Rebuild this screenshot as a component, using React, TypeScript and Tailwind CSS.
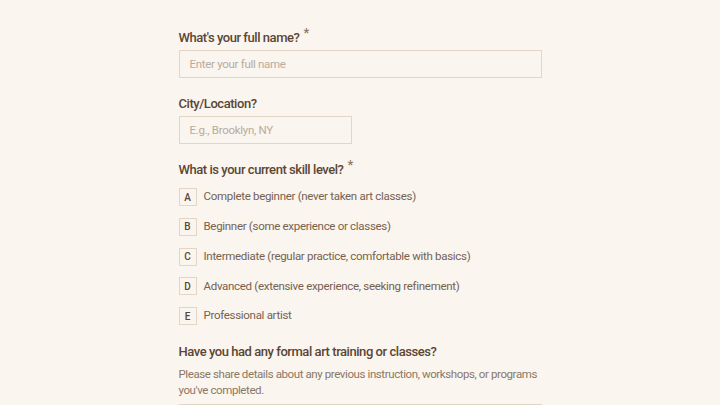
import { useState } from "react";

const skillOptions = [
  { key: "A", label: "Complete beginner (never taken art classes)" },
  { key: "B", label: "Beginner (some experience or classes)" },
  { key: "C", label: "Intermediate (regular practice, comfortable with basics)" },
  { key: "D", label: "Advanced (extensive experience, seeking refinement)" },
  { key: "E", label: "Professional artist" },
];

function Label({ children, required }: { children: React.ReactNode; required?: boolean }) {
  return (
    <label className="flex h-5 items-center text-[13px] font-medium leading-5 tracking-[-0.45px] text-[#5b4634]">
      {children}
      {required && <span className="relative -top-[5px] ml-[4px] text-[13px] text-[#8a7865]">*</span>}
    </label>
  );
}

export default function App() {
  const [skill, setSkill] = useState<string | null>(null);

  return (
    <div
      className="min-h-[405px] w-full bg-[#faf5ef]"
      style={{ fontFamily: "Roboto, 'Liberation Sans', sans-serif" }}
    >
      <div className="mx-auto flex w-[363px] flex-col pt-[28px]">
        <Label required>What's your full name?</Label>
        <input
          type="text"
          placeholder="Enter your full name"
          className="mt-[2px] h-[28px] w-full border border-[#e3d6c7] bg-[#faf5ef] px-[10px] text-[11.5px] tracking-[-0.3px] text-[#5b4634] placeholder:text-[#b9ab9b] focus:outline-none"
        />

        <div className="mt-[16px]">
          <Label>City/Location?</Label>
        </div>
        <input
          type="text"
          placeholder="E.g., Brooklyn, NY"
          className="mt-[2px] h-[28px] w-[173px] border border-[#e3d6c7] bg-[#faf5ef] px-[10px] text-[11.5px] tracking-[-0.3px] text-[#5b4634] placeholder:text-[#b9ab9b] focus:outline-none"
        />

        <div className="mt-[16px]">
          <Label required>What is your current skill level?</Label>
        </div>
        <div className="mt-[8px] flex flex-col gap-[11.75px]">
          {skillOptions.map((opt) => (
            <button
              key={opt.key}
              type="button"
              onClick={() => setSkill(opt.key)}
              className="flex h-[18px] items-center gap-[7px] text-left"
            >
              <span
                className={`flex h-[18px] w-[18px] items-center justify-center border text-[10px] font-medium ${
                  skill === opt.key
                    ? "border-[#8a6d52] bg-[#8a6d52] text-white"
                    : "border-[#e3d6c7] text-[#5b4634]"
                }`}
              >
                {opt.key}
              </span>
              <span className="text-[11.5px] tracking-[-0.3px] text-[#76624f]">{opt.label}</span>
            </button>
          ))}
        </div>

        <div className="mt-[17px]">
          <Label>Have you had any formal art training or classes?</Label>
        </div>
        <p className="mt-[4px] text-[11.5px] leading-[16px] tracking-[-0.4px] text-[#8a7865]">
          Please share details about any previous instruction, workshops, or programs you've completed.
        </p>
        <textarea className="mt-[6px] h-[80px] w-full resize-none border border-[#e3d6c7] bg-[#faf5ef] focus:outline-none" />
      </div>
    </div>
  );
}
